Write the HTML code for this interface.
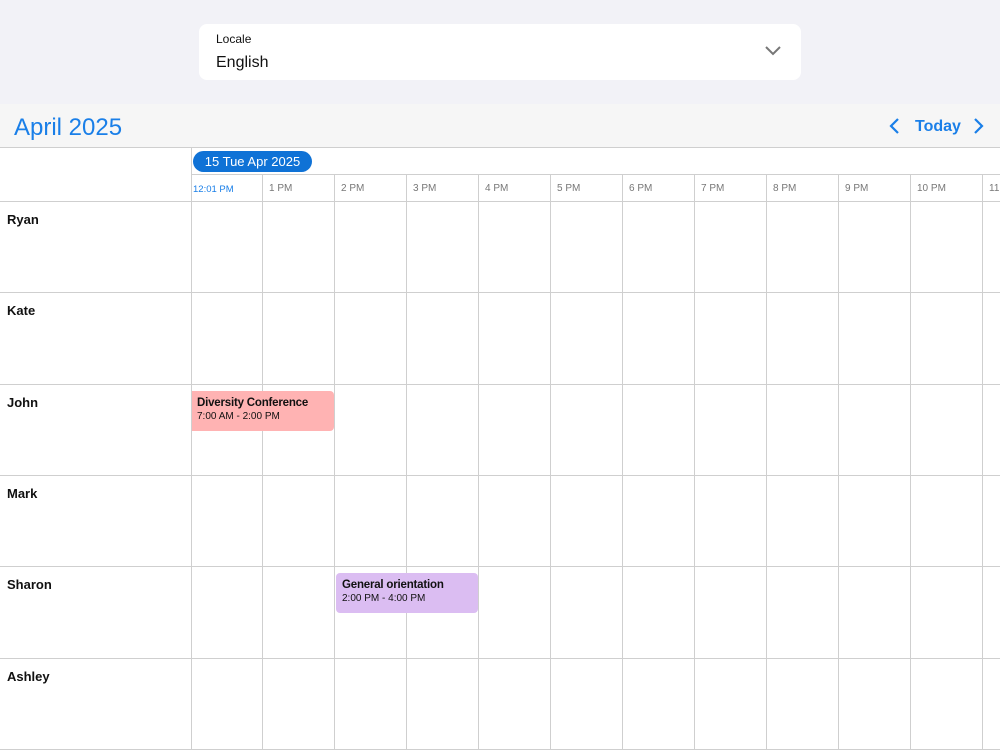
<!DOCTYPE html>
<html><head><meta charset="utf-8"><style>
*{margin:0;padding:0;box-sizing:border-box}
body{width:1000px;height:750px;overflow:hidden;background:#fff;font-family:"Liberation Sans",sans-serif;position:relative}
.a{position:absolute;white-space:nowrap}
.top{left:0;top:0;width:1000px;height:104px;background:#f2f2f7}
.card{left:199px;top:24px;width:602px;height:56px;background:#fff;border-radius:8px}
.hdr{left:0;top:104px;width:1000px;height:44px;background:#f6f6f6;border-bottom:1px solid #cfcfcf}
.vl{width:1px;background:#cfcfcf}
.hl{height:1px;background:#cfcfcf}
.tl{font-size:10px;color:#777;top:183px}
.nm{left:7px;font-size:13px;font-weight:bold;color:#111}
.ev{border-radius:4px;padding:6px 6px;color:#111}
.ev b{display:block;font-size:11.5px;font-weight:bold;letter-spacing:-0.2px}
.ev span{font-size:10px;display:block;margin-top:2px}
</style></head><body>
<div class="a top"></div>
<div class="a card">
<div class="a" style="left:17px;top:8px;font-size:12px;color:#111">Locale</div>
<div class="a" style="left:17px;top:30px;font-size:16px;color:#111">English</div>
<svg class="a" style="left:565px;top:21px" width="18" height="12" viewBox="0 0 18 12"><path d="M2 2 L9 9 L16 2" fill="none" stroke="#777" stroke-width="2"/></svg>
</div>
<div class="a hdr">
<div class="a" style="left:14px;top:10px;font-size:24px;color:#1a7fe8">April 2025</div>
<svg class="a" style="left:888px;top:13px" width="14" height="18" viewBox="0 0 14 18"><path d="M10 2 L3 9 L10 16" fill="none" stroke="#1a7fe8" stroke-width="2.2"/></svg>
<div class="a" style="left:915px;top:14px;font-size:16px;font-weight:bold;color:#1a7fe8">Today</div>
<svg class="a" style="left:971px;top:13px" width="14" height="18" viewBox="0 0 14 18"><path d="M4 2 L11 9 L4 16" fill="none" stroke="#1a7fe8" stroke-width="2.2"/></svg>
</div>
<div class="a" style="left:193px;top:151px;width:119px;height:21px;background:#0f72d6;border-radius:11px;color:#fff;font-size:13px;line-height:22px;text-align:center">15 Tue Apr 2025</div>
<div class="a hl" style="left:191px;top:174px;width:809px"></div>
<div class="a hl" style="left:0;top:201px;width:1000px"></div>
<div class="a vl" style="left:191px;top:148px;height:602px"></div>
<div class="a tl" style="left:193px;color:#1a7fe8;font-size:9.5px;top:184px">12:01 PM</div>
<div class="a tl" style="left:269px">1 PM</div>
<div class="a tl" style="left:341px">2 PM</div>
<div class="a tl" style="left:413px">3 PM</div>
<div class="a tl" style="left:485px">4 PM</div>
<div class="a tl" style="left:557px">5 PM</div>
<div class="a tl" style="left:629px">6 PM</div>
<div class="a tl" style="left:701px">7 PM</div>
<div class="a tl" style="left:773px">8 PM</div>
<div class="a tl" style="left:845px">9 PM</div>
<div class="a tl" style="left:917px">10 PM</div>
<div class="a tl" style="left:989px">11 PM</div>
<div class="a vl" style="left:262px;top:174px;height:576px"></div>
<div class="a vl" style="left:334px;top:174px;height:576px"></div>
<div class="a vl" style="left:406px;top:174px;height:576px"></div>
<div class="a vl" style="left:478px;top:174px;height:576px"></div>
<div class="a vl" style="left:550px;top:174px;height:576px"></div>
<div class="a vl" style="left:622px;top:174px;height:576px"></div>
<div class="a vl" style="left:694px;top:174px;height:576px"></div>
<div class="a vl" style="left:766px;top:174px;height:576px"></div>
<div class="a vl" style="left:838px;top:174px;height:576px"></div>
<div class="a vl" style="left:910px;top:174px;height:576px"></div>
<div class="a vl" style="left:982px;top:174px;height:576px"></div>
<div class="a hl" style="left:0;top:292px;width:1000px"></div>
<div class="a hl" style="left:0;top:384px;width:1000px"></div>
<div class="a hl" style="left:0;top:475px;width:1000px"></div>
<div class="a hl" style="left:0;top:566px;width:1000px"></div>
<div class="a hl" style="left:0;top:658px;width:1000px"></div>
<div class="a hl" style="left:0;top:749px;width:1000px"></div>
<div class="a nm" style="top:212px">Ryan</div>
<div class="a nm" style="top:303px">Kate</div>
<div class="a nm" style="top:395px">John</div>
<div class="a nm" style="top:486px">Mark</div>
<div class="a nm" style="top:577px">Sharon</div>
<div class="a nm" style="top:669px">Ashley</div>
<div class="a ev" style="left:192px;top:391px;width:142px;height:40px;background:#ffb3b3;border-radius:0 4px 4px 0;padding-left:5px"><b>Diversity Conference</b><span>7:00 AM - 2:00 PM</span></div>
<div class="a ev" style="left:336px;top:573px;width:142px;height:40px;background:#dbbdf2"><b>General orientation</b><span>2:00 PM - 4:00 PM</span></div>
</body></html>
